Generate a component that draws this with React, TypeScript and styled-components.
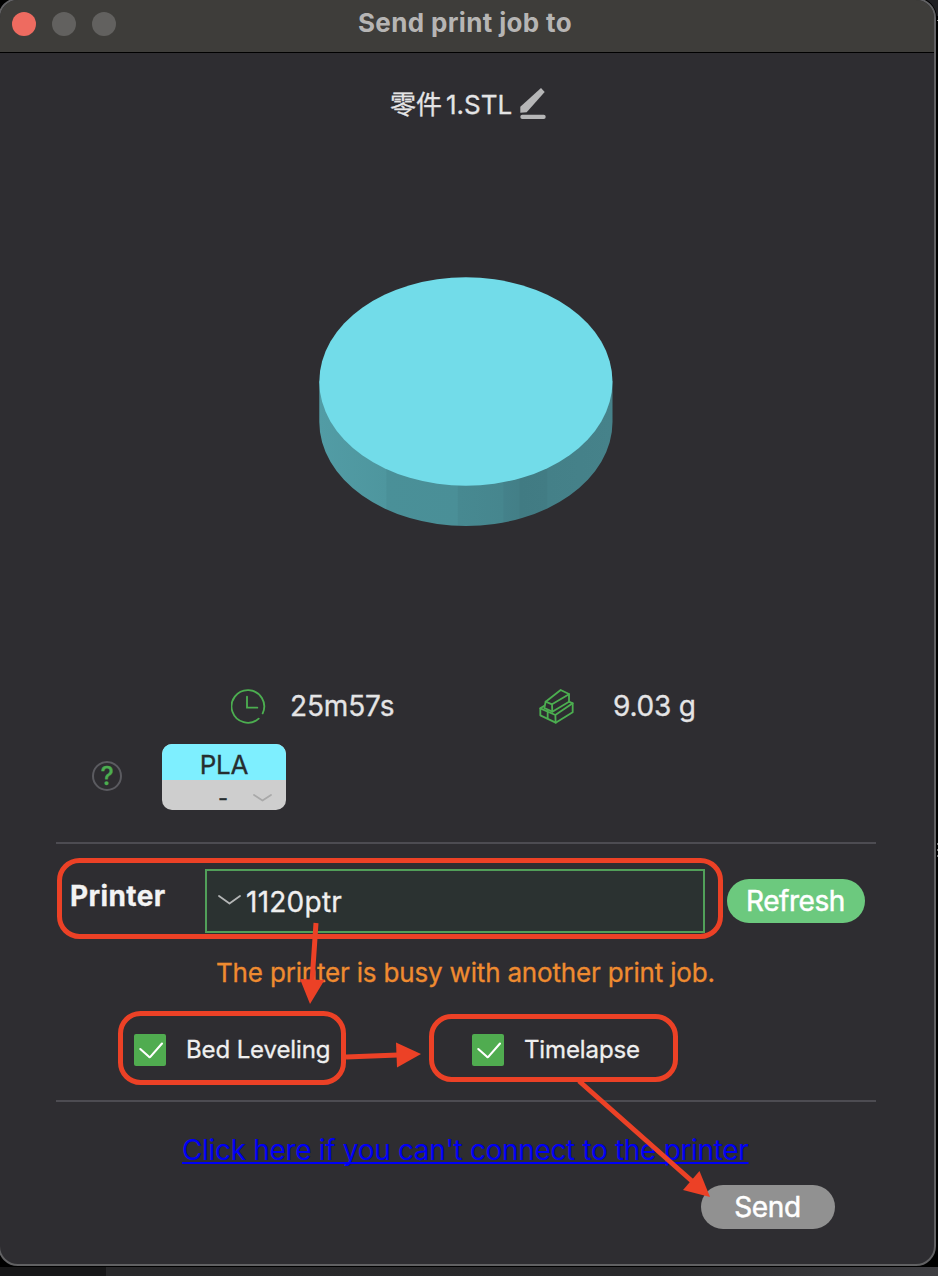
import React from 'react';
import styled, { createGlobalStyle } from 'styled-components';

const Global = createGlobalStyle`
  *, *::before, *::after { box-sizing: border-box; }
  body {
    margin: 0;
    background: #000;
    font-family: Inter, "Noto Sans CJK SC", sans-serif;
    color: #e4e4e5;
    -webkit-text-stroke: 0.3px;
  }
`;

const Desktop = styled.main`
  position: relative;
  width: 938px;
  height: 1276px;
  overflow: hidden;
  background:
    linear-gradient(90deg, #171718 106px, #28282a 106px, #29292b 70%, #3e3e42) 0 1267px / 100% 9px no-repeat,
    linear-gradient(#1f1f22, #1f1f22) 916px 0 / 22px 16px no-repeat,
    linear-gradient(#999, #999) 937px 20px / 1px 1px no-repeat,
    repeating-linear-gradient(#777 0 2px, #000 2px 6px) 937px 843px / 1px 15px no-repeat,
    #000;
`;

const Window = styled.section`
  display: flex;
  flex-direction: column;
  width: 938px;
  height: 1268px;
  margin: -2px 0 0 -2px;
  border: 2px solid #616163;
  border-radius: 20px;
  overflow: hidden;
  background: #2e2d31;
  box-shadow: 0 0 0 1px #000;
`;

const TitleBar = styled.header`
  display: flex;
  align-items: center;
  height: 53px;
  padding: 0 12px 5px;
  border-bottom: 1px solid #000;
  background: #3e3d3a;
`;

const Lights = styled.div`
  display: flex;
  gap: 16px;
  width: 104px;
`;

const Light = styled.span<{ $color: string }>`
  width: 24px;
  height: 24px;
  border-radius: 50%;
  background: ${(p) => p.$color};
`;

const Title = styled.h1`
  margin: 0 0 1px 242px;
  font-size: 26px;
  line-height: 32px;
  font-weight: 700;
  letter-spacing: 0.35px;
  color: #b6b5b4;
  -webkit-text-stroke: 0;
`;

const FileRow = styled.div`
  display: flex;
  align-items: center;
  height: 104px;
  padding-left: 390px;
  font-size: 26px;
  line-height: 32px;
`;

const FileStem = styled.span`
  width: 56px;
`;

const FileExt = styled.span`
  width: 74px;
`;

const Preview = styled.div`
  display: flex;
  height: 490px;
  padding: 120px 0 0 319px;
`;

const Stats = styled.div`
  display: flex;
  align-items: center;
  height: 118px;
  padding-left: 231px;
  font-size: 28px;
  line-height: 34px;
`;

const Stat = styled.div<{ $width: number; $gap: number; $spacing: number }>`
  display: flex;
  align-items: center;
  gap: ${(p) => p.$gap}px;
  width: ${(p) => p.$width}px;
  letter-spacing: ${(p) => p.$spacing}px;
`;

const Filaments = styled.div`
  display: flex;
  align-items: center;
  gap: 40px;
  height: 66px;
  margin: -21px 0 32px 92px;
`;

const Help = styled.button`
  width: 30px;
  height: 30px;
  margin-bottom: 2px;
  padding: 0;
  border: 2px solid #5b5b60;
  border-radius: 50%;
  background: none;
  color: #4cae50;
  font: 500 25px/26px Inter, sans-serif;
`;

const Filament = styled.div`
  display: flex;
  flex-direction: column;
  width: 124px;
  height: 66px;
  border-radius: 10px;
  overflow: hidden;
  background: #cecece;
  color: #262e30;
`;

const FilamentType = styled.div`
  height: 36px;
  padding-top: 5px;
  background: #7eefff;
  font-size: 26px;
  line-height: 32px;
  letter-spacing: -0.3px;
  text-align: center;
`;

const FilamentSlot = styled.div`
  display: flex;
  align-items: center;
  gap: 25px;
  height: 30px;
  padding: 5px 0 0 56px;
  font-size: 22px;
  line-height: 26px;
`;

const Divider = styled.hr`
  flex: none;
  width: 820px;
  height: 2px;
  margin: 0 0 0 56px;
  border: 0;
  background: #4d4c52;
`;

const PrinterRow = styled.div`
  display: flex;
  align-items: center;
  height: 114px;
  padding-left: 70px;
`;

const PrinterLabel = styled.label`
  width: 135px;
  margin-bottom: 10px;
  font-size: 28px;
  line-height: 34px;
  font-weight: 700;
  letter-spacing: 0.4px;
  color: #f3f3f3;
`;

const Select = styled.div`
  display: flex;
  align-items: center;
  gap: 5px;
  width: 500px;
  height: 64px;
  margin-right: 22px;
  padding: 2px 0 0 11px;
  border: 2px solid #519f59;
  background: #2b3231;
  font-size: 28px;
  line-height: 34px;
  letter-spacing: 0.25px;
  color: #efefef;
`;

const SelectArrow = styled.span`
  display: flex;
  margin-bottom: 2px;
`;

const Pill = styled.button<{ $color: string; $width: number; $spacing: number }>`
  width: ${(p) => p.$width}px;
  height: 44px;
  padding: 0 1px 1px 0;
  border: 0;
  border-radius: 22px;
  background: ${(p) => p.$color};
  color: #fff;
  font: 400 28px/34px Inter, sans-serif;
  -webkit-text-stroke: 0.5px #fff;
  letter-spacing: ${(p) => p.$spacing}px;
`;

const Warning = styled.p`
  height: 32px;
  margin: -1px 0 0 216px;
  font-size: 26px;
  line-height: 32px;
  letter-spacing: -0.18px;
  white-space: nowrap;
  color: #ef8b30;
`;

const Options = styled.div`
  display: flex;
  align-items: center;
  height: 111px;
  padding: 21px 0 10px 134px;
`;

const Option = styled.label<{ $width: number }>`
  display: flex;
  align-items: center;
  gap: 20px;
  width: ${(p) => p.$width}px;
  font-size: 24px;
  line-height: 30px;
  letter-spacing: -0.12px;
  color: #efefef;
`;

const CheckMark = styled.svg`
  border-radius: 2px;
  background: #50ac50;
`;

const Footer = styled.footer`
  display: flex;
  flex-direction: column;
  align-items: flex-start;
  padding: 31px 0 0 182px;
`;

const HelpLink = styled.a`
  font-size: 28px;
  line-height: 34px;
  letter-spacing: -0.33px;
  white-space: nowrap;
  color: #0000f5;
  -webkit-text-stroke: 0;
  text-decoration: underline;
  text-decoration-thickness: 2px;
  text-underline-offset: 2px;
  text-decoration-skip-ink: none;
`;

const SendSlot = styled.div`
  margin: 18px 0 0 519px;
`;

const Annotations = styled.svg`
  position: absolute;
  inset: 0;
  pointer-events: none;
`;

const PenMark = styled.svg`
  margin-bottom: 3px;
`;

const PenIcon = () => (
  <PenMark width="26" height="31" viewBox="0 0 78 93" fill="#b6b6b7">
    <path d="M1 56 63 0 74 12 20 73 1 74Z" />
    <rect x="1" y="80" width="76" height="13" rx="6" />
  </PenMark>
);

const Disk = () => (
  <svg width="294" height="250" viewBox="0 0 294 250">
    <defs>
      <linearGradient id="side">
        <stop offset="0" stopColor="#529ca5" />
        <stop offset="0.228" stopColor="#4e969e" />
        <stop offset="0.23" stopColor="#4a9098" />
        <stop offset="0.47" stopColor="#4a8f97" />
        <stop offset="0.475" stopColor="#478991" />
        <stop offset="0.625" stopColor="#46868e" />
        <stop offset="0.63" stopColor="#44818a" />
        <stop offset="0.68" stopColor="#437f87" />
        <stop offset="0.685" stopColor="#417b83" />
        <stop offset="0.775" stopColor="#427c84" />
        <stop offset="0.78" stopColor="#448088" />
        <stop offset="1" stopColor="#46828a" />
      </linearGradient>
    </defs>
    <path d="M.3 104.5V145A146.6 104 0 0 0 293.5 145V104.5Z" fill="url(#side)" />
    <ellipse cx="146.9" cy="104.5" rx="146.6" ry="104.2" fill="#72dce9" />
  </svg>
);

const ClockIcon = () => (
  <svg width="35" height="35" viewBox="0 0 105 105" fill="none" stroke="#4cae50" strokeWidth="5.5" strokeLinecap="round">
    <path d="M83 89A49 49 0 1 1 95 73" />
    <path d="M48 23V56H79" />
  </svg>
);

const SpoolIcon = () => (
  <svg width="35" height="35" viewBox="0 0 105 105" fill="none" stroke="#4cae50" strokeWidth="5.5" strokeLinejoin="round" strokeLinecap="round">
    <path d="M20 38 65 3 90 15V38L40 68 16 57Z" />
    <path d="M20 38 39 46 40 68M39 46 90 16" />
    <path d="M16 50 4 58V79L50 101 101 70V43L90 38" />
    <path d="M4 58 49 78 50 101M49 78 101 43M26 66V88" />
  </svg>
);

const Chevron = ({ width, color }: { width: number; color: string }) => (
  <svg width={width} height="12" viewBox={`0 0 ${width} 12`} fill="none" stroke={color} strokeWidth="1.8" strokeLinecap="round" strokeLinejoin="round">
    <path d={width > 20 ? 'M1 1 11.5 8.5 22 1' : 'M1 3 9.5 8.5 18 3'} />
  </svg>
);

const Check = () => (
  <CheckMark width="32" height="32" viewBox="0 0 32 32" fill="none" stroke="#fff" strokeWidth="2.1" strokeLinecap="round" strokeLinejoin="round">
    <path d="M6.3 15 15 22.8Q15.8 23.4 16.5 22.6L28 9.5" />
  </CheckMark>
);

export default function App() {
  return (
    <Desktop>
      <Global />
      <Window>
        <TitleBar>
          <Lights>
            <Light $color="#ee6b60" />
            <Light $color="#62615f" />
            <Light $color="#62615f" />
          </Lights>
          <Title>Send print job to</Title>
        </TitleBar>
        <FileRow>
          <FileStem>零件</FileStem>
          <FileExt>1.STL</FileExt>
          <PenIcon />
        </FileRow>
        <Preview>
          <Disk />
        </Preview>
        <Stats>
          <Stat $width={308} $gap={24} $spacing={-0.15}>
            <ClockIcon />
            25m57s
          </Stat>
          <Stat $width={170} $gap={39} $spacing={-0.2}>
            <SpoolIcon />
            9.03 g
          </Stat>
        </Stats>
        <Filaments>
          <Help>?</Help>
          <Filament>
            <FilamentType>PLA</FilamentType>
            <FilamentSlot>
              -
              <Chevron width={19} color="#a9a9a9" />
            </FilamentSlot>
          </Filament>
        </Filaments>
        <Divider />
        <PrinterRow>
          <PrinterLabel>Printer</PrinterLabel>
          <Select>
            <SelectArrow>
              <Chevron width={23} color="#b4b6b6" />
            </SelectArrow>
            1120ptr
          </Select>
          <Pill $color="#6cc97e" $width={138} $spacing={-0.45}>
            Refresh
          </Pill>
        </PrinterRow>
        <Warning>The printer is busy with another print job.</Warning>
        <Options>
          <Option $width={338}>
            <Check />
            Bed Leveling
          </Option>
          <Option $width={170}>
            <Check />
            Timelapse
          </Option>
        </Options>
        <Divider />
        <Footer>
          <HelpLink>Click here if you can't connect to the printer</HelpLink>
          <SendSlot>
            <Pill $color="#919191" $width={134} $spacing={-0.4}>
              Send
            </Pill>
          </SendSlot>
        </Footer>
      </Window>
      <Annotations width="938" height="1276" viewBox="0 0 938 1276">
        <g fill="none" stroke="#ec4126" strokeWidth="5">
          <rect x="59.5" y="860.5" width="661" height="76" rx="20" />
          <rect x="120.5" y="1013.5" width="223" height="69" rx="20" />
          <rect x="431.5" y="1016.5" width="244" height="63" rx="20" />
          <path d="M316 923 312 982M346 1057 398 1055M579 1081 693 1182" />
        </g>
        <g fill="#ec4126">
          <path d="M300 979 324.5 980 310 1004Z" />
          <path d="M396 1042.5 397 1067.5 421 1054Z" />
          <path d="M683 1190 699.5 1171 710 1197Z" />
        </g>
      </Annotations>
    </Desktop>
  );
}
